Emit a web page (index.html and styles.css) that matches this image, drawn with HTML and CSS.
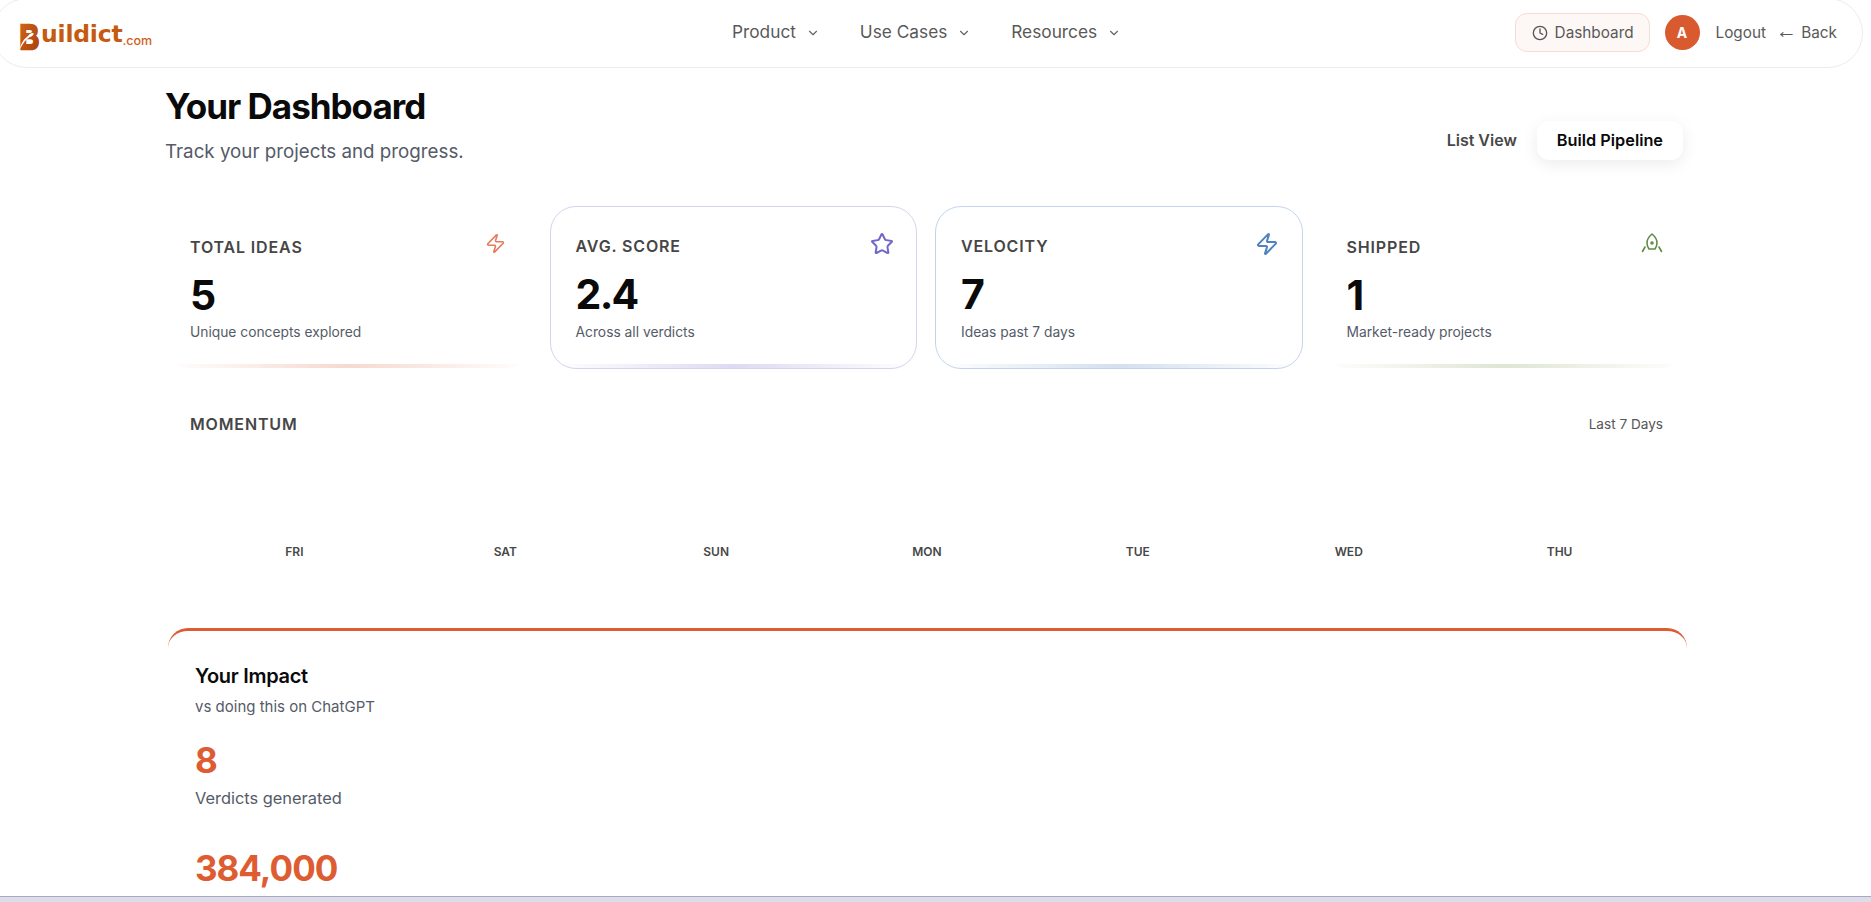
FILE: index.html
```html
<!DOCTYPE html>
<html lang="en">
<head>
<meta charset="utf-8">
<title>Your Dashboard</title>
<link rel="stylesheet" href="styles.css">
</head>
<body>
<header class="topbar">
  <a class="logo">
    <svg class="logo-mark" width="22" height="30" viewBox="0 0 22 30" aria-hidden="true">
      <defs><linearGradient id="lg" x1="0" y1="0" x2="1" y2="1"><stop offset="0" stop-color="#d2691e"/><stop offset="1" stop-color="#a83c08"/></linearGradient></defs>
      <text transform="translate(0.500 26.500) scale(.76 1)" font-family="Liberation Sans" font-weight="700" font-size="36" fill="url(#lg)" stroke="url(#lg)" stroke-width="2.500">B</text>
      <path d="M1 27C2 21 5 17 9 14 10 12 12 10.500 14.500 11 15 13 13 14.500 11 15 7 17 4 21 1 27z" fill="#fff"/>
    </svg>
    <span class="logo-word">uildict</span><span class="logo-tld">.com</span>
  </a>
  <nav class="nav">
    <a class="nav-item">Product <svg class="chev" viewBox="0 0 24 24"><path d="m6 9 6 6 6-6"/></svg></a>
    <a class="nav-item">Use Cases <svg class="chev" viewBox="0 0 24 24"><path d="m6 9 6 6 6-6"/></svg></a>
    <a class="nav-item">Resources <svg class="chev" viewBox="0 0 24 24"><path d="m6 9 6 6 6-6"/></svg></a>
  </nav>
  <div class="actions">
    <a class="dash-btn"><svg class="clock" viewBox="0 0 24 24"><circle cx="12" cy="12" r="10"/><path d="M12 6v6l4 2"/></svg>Dashboard</a>
    <span class="avatar">A</span>
    <a class="link logout">Logout</a>
    <a class="link"><span class="arrow">←</span> Back</a>
  </div>
</header>

<main class="page">
  <section class="head">
    <div>
      <h1>Your Dashboard</h1>
      <p class="lead">Track your projects and progress.</p>
    </div>
    <div class="toggle">
      <a class="tab">List View</a>
      <a class="tab tab-active">Build Pipeline</a>
    </div>
  </section>

  <section class="cards">
    <article class="card card-plain accent-orange">
      <div class="card-top"><span class="label">TOTAL IDEAS</span>
        <svg class="ico ico-orange" viewBox="0 0 24 24"><path d="M4 14a1 1 0 0 1-.78-1.630l9.900-10.200a.5.5 0 0 1 .86.46l-1.920 6.020A1 1 0 0 0 13 10h7a1 1 0 0 1 .78 1.630l-9.900 10.200a.5.5 0 0 1-.86-.46l1.920-6.020A1 1 0 0 0 11 14z"/></svg></div>
      <div class="num">5</div>
      <p class="note">Unique concepts explored</p>
    </article>
    <article class="card card-violet accent-violet">
      <div class="card-top"><span class="label">AVG. SCORE</span>
        <svg class="ico ico-violet" viewBox="0 0 24 24"><path d="M11.525 2.295a.53.53 0 0 1 .95 0l2.310 4.679a2.123 2.123 0 0 0 1.595 1.160l5.166.756a.53.53 0 0 1 .294.904l-3.736 3.638a2.123 2.123 0 0 0-.611 1.878l.882 5.140a.53.53 0 0 1-.771.56l-4.618-2.428a2.122 2.122 0 0 0-1.973 0L6.396 21.010a.53.53 0 0 1-.77-.56l.881-5.139a2.122 2.122 0 0 0-.611-1.879L2.160 9.795a.53.53 0 0 1 .294-.906l5.165-.755a2.122 2.122 0 0 0 1.597-1.160z"/></svg></div>
      <div class="num">2.4</div>
      <p class="note">Across all verdicts</p>
    </article>
    <article class="card card-blue accent-blue">
      <div class="card-top"><span class="label">VELOCITY</span>
        <svg class="ico ico-blue" viewBox="0 0 24 24"><path d="M4 14a1 1 0 0 1-.78-1.630l9.900-10.200a.5.5 0 0 1 .86.46l-1.920 6.020A1 1 0 0 0 13 10h7a1 1 0 0 1 .78 1.630l-9.900 10.200a.5.5 0 0 1-.86-.46l1.920-6.020A1 1 0 0 0 11 14z"/></svg></div>
      <div class="num">7</div>
      <p class="note">Ideas past 7 days</p>
    </article>
    <article class="card card-plain accent-green">
      <div class="card-top"><span class="label">SHIPPED</span>
        <svg class="ico ico-green" viewBox="0 0 24 24"><path d="M12 2c-3 2.500-5 6-5 9 0 2.500 1 4.500 2 6h6c1-1.500 2-3.500 2-6 0-3-2-6.500-5-9z"/><circle cx="12" cy="11" r="1"/><path d="M5 15l-2.500 4.500M19 15l2.500 4.500"/></svg></div>
      <div class="num">1</div>
      <p class="note">Market-ready projects</p>
    </article>
  </section>

  <section class="momentum">
    <div class="momentum-head"><span class="label">MOMENTUM</span><span class="range">Last 7 Days</span></div>
    <div class="days">
      <span>FRI</span><span>SAT</span><span>SUN</span><span>MON</span><span>TUE</span><span>WED</span><span>THU</span>
    </div>
  </section>

  <section class="impact">
    <h2>Your Impact</h2>
    <p class="impact-sub">vs doing this on ChatGPT</p>
    <div class="big">8</div>
    <p class="big-note">Verdicts generated</p>
    <div class="big big-gap">384,000</div>
  </section>
</main>
<div class="window-edge"></div>
</body>
</html>
```
FILE: styles.css
```css
* { box-sizing: border-box; }
html, body { height: 100%; }
body {
  margin: 0;
  height: 902px;
  overflow: hidden;
  background: #fff;
  color: #0a0a0a;
  font-family: Inter, "Liberation Sans", sans-serif;
}
h1, h2, p { margin: 0; }

.topbar {
  display: grid;
  grid-template-columns: 1fr auto 1fr;
  align-items: center;
  width: 1871px;
  height: 70px;
  padding: 0 25px 3px 26px;
  margin: -2px 0 0 -8px;
  background: #fff;
  border: 1px solid #ececec;
  border-radius: 36px;
}
.logo { display: flex; align-items: flex-end; height: 30px; margin-top: 11px; }
.logo-mark { display: block; flex: none; overflow: visible; }
.logo-word {
  font-family: "DejaVu Sans", sans-serif;
  font-weight: 700;
  font-size: 23.500px;
  line-height: 30px;
  height: 30px;
  color: #c65a10;
  letter-spacing: -.2px;
  margin-bottom: 3px;
}
.logo-tld { font-size: 12.500px; font-weight: 500; line-height: 16px; color: #d0601c; margin: 0 0 3px 0; }

.nav { display: flex; gap: 40px; margin-right: 3px; }
.nav-item { display: flex; align-items: center; font-size: 17.300px; color: #595959; white-space: pre; }
.chev { width: 14px; height: 14px; margin-left: 5px; margin-top: 2px; fill: none; stroke: #666; stroke-width: 2; stroke-linecap: round; stroke-linejoin: round; }

.actions { display: flex; align-items: center; justify-content: flex-end; font-size: 16px; color: #595959; margin-top: 2px; }
.dash-btn {
  display: flex; align-items: center; gap: 7px;
  height: 39px; padding: 0 15px 0 16px;
  background: #fdf8f5;
  border: 1px solid #f6dcd2;
  border-radius: 12px;
  font-size: 15.300px;
}
.clock { width: 16px; height: 16px; fill: none; stroke: #555; stroke-width: 2; stroke-linecap: round; stroke-linejoin: round; }
.avatar {
  display: flex; align-items: center; justify-content: center;
  width: 35px; height: 35px; margin: 0 16px 0 15px;
  border-radius: 50%;
  background: #da5a30; color: #fff;
  font-size: 14px; font-weight: 700;
}
.link { white-space: nowrap; font-size: 15.300px; line-height: 20px; }
.arrow { font-family: "Liberation Sans", sans-serif; font-size: 21px; line-height: 0; }
.logout { margin-right: 10px; }

.page { width: 1524px; margin-left: 164px; }

.head { display: flex; justify-content: space-between; align-items: flex-start; height: 105px; padding-left: 1px; }
h1 { font-size: 35px; line-height: 40px; font-weight: 700; letter-spacing: -1px; margin-top: 18px; }
.lead { font-size: 18.750px; line-height: 28px; color: #555b68; margin-top: 12px; }
.toggle { display: flex; align-items: center; margin: 53px 5px 0 0; }
.tab { display: block; padding: 0 20px; height: 39px; line-height: 39px; font-size: 16px; font-weight: 600; color: #484848; border-radius: 12px; }
.tab-active { color: #0a0a0a; background: #fff; font-size: 16.300px; box-shadow: 0 4px 16px rgba(0,0,0,.08); }

.cards { display: grid; grid-template-columns: repeat(4, 1fr); gap: 18px; margin-top: 33px; }
.card {
  position: relative;
  height: 163px;
  padding: 25px 25px 0;
  border: 1px solid transparent;
  border-radius: 26px;
  overflow: hidden;
  background: #fff;
}
.card-plain { padding-top: 26px; }
.card-plain .note { margin-top: 3.500px; }
.card-violet { border-color: #d6d3ee; }
.card-blue { border-color: #c3d5ec; }
.card::after {
  content: "";
  position: absolute;
  left: 0; right: 0; bottom: 0;
  height: 4px;
}
.accent-orange::after { background: linear-gradient(90deg, transparent, #f6d9cf, transparent); }
.accent-violet::after { background: linear-gradient(90deg, transparent, #dfdaf2, transparent); }
.accent-blue::after { background: linear-gradient(90deg, transparent, #d3e0ef, transparent); }
.accent-green::after { background: linear-gradient(90deg, transparent, #dfe6d3, transparent); }

.card-top { display: flex; justify-content: space-between; align-items: flex-start; height: 37px; }
.label { font-size: 16px; line-height: 28px; font-weight: 600; letter-spacing: .85px; color: #464646; }
.ico { width: 24px; height: 24px; flex: none; fill: none; stroke-width: 2; stroke-linecap: round; stroke-linejoin: round; margin-right: -2px; }
.ico-orange { stroke: #e57a5c; width: 21px; height: 21px; margin-right: 0; stroke-width: 1.800; }
.ico-violet { stroke: #7167c9; margin-right: -3px; }
.ico-blue { stroke: #4d84c0; }
.ico-green { stroke: #5f8c43; stroke-width: 1.600; margin-top: -1px; }
.num { font-size: 41px; line-height: 46px; font-weight: 700; letter-spacing: -1.700px; color: #0a0a0a; margin-top: 2px; }
.note { font-size: 13.800px; line-height: 20px; color: #555b68; margin-top: 4.500px; }

.momentum { margin-top: 39.500px; padding: 0 23px 0 26px; }
.momentum-head { display: flex; justify-content: space-between; align-items: center; height: 30px; padding-right: 2px; }
.range { font-size: 13.600px; color: #555; }
.days { display: grid; grid-template-columns: repeat(7, 1fr); margin: 105.500px 0 0 -1px; text-align: center; font-size: 12px; line-height: 16px; font-weight: 600; color: #474747; }

.impact {
  margin: 68px 1px 0 4px;
  height: 300px;
  padding: 31px 27px 0;
  border-top: 3px solid #de5c32;
  border-radius: 20px 20px 0 0;
}
h2 { font-size: 20px; line-height: 28px; font-weight: 600; letter-spacing: -.3px; color: #0a0a0a; }
.impact-sub { font-size: 15px; line-height: 20px; color: #555b68; margin-top: 7px; }
.big { font-size: 35px; line-height: 40px; font-weight: 700; letter-spacing: -1px; color: #de5c32; margin-top: 23px; }
.big-note { font-size: 16.400px; line-height: 24px; color: #555b68; margin-top: 6px; }
.big-gap { margin-top: 37.500px; }

.window-edge {
  position: fixed;
  left: 0; right: 0; bottom: 0;
  height: 6px;
  background: #dcdcec;
  border-top: 1px solid #aaa9b9;
}
```
